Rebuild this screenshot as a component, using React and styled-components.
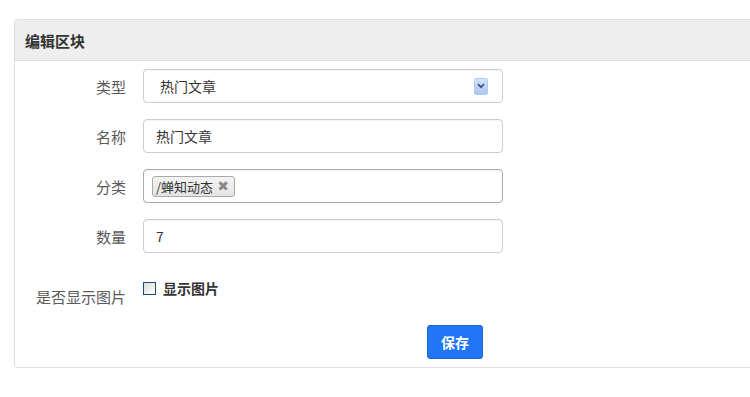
import React from "react";
import styled, { createGlobalStyle } from "styled-components";

const Global = createGlobalStyle`
  html, body { margin: 0; padding: 0; background: #fff; overflow: hidden; }
  body { font-family: "Noto Sans CJK SC", "Liberation Sans", sans-serif; font-size: 14px; color: #333; }
`;

const Page = styled.div`
  padding: 19px 0 0 14px;
`;

const Panel = styled.section`
  width: 800px;
  border: 1px solid #dddddd;
  border-radius: 4px 0 0 4px;
  background: #fff;
`;

const Header = styled.header`
  height: 40px;
  background: #eeeeee;
  border-bottom: 1px solid #dddddd;
  border-radius: 4px 0 0 0;
  display: flex;
  align-items: center;
  padding-left: 10px;
  font-weight: bold;
  font-size: 15px;
  color: #333;
`;

const Body = styled.div`
  padding: 8px 0 8px 0;
  display: flex;
  flex-direction: column;
  gap: 16px;
`;

const Row = styled.div`
  display: grid;
  grid-template-columns: 111px 360px;
  column-gap: 17px;
  align-items: ${(p) => p.$align || "center"};
  min-height: ${(p) => p.$h || 34}px;
`;

const Label = styled.label`
  text-align: right;
  color: #5a5a5a;
  font-size: 15px;
  padding-top: ${(p) => p.$pt || 0}px;
`;

const Field = styled.div`
  box-sizing: border-box;
  height: 34px;
  border: 1px solid ${(p) => (p.$dark ? "#aaaaaa" : "#cccccc")};
  border-radius: 4px;
  background: #fff;
  display: flex;
  align-items: center;
  padding-left: ${(p) => p.$pl || 12}px;
  padding-right: 14px;
  font-size: 14px;
  color: #333;
  box-shadow: inset 0 1px 1px rgba(0, 0, 0, 0.04);
`;

const Grow = styled.span`
  flex: 1;
`;

const ArrowBox = styled.span`
  width: 14px;
  height: 17px;
  box-sizing: border-box;
  border-radius: 2px;
  background: linear-gradient(#d3e2fa, #aac7f2);
  border: 1px solid #b5cbee;
  display: flex;
  align-items: center;
  justify-content: center;
`;

const Tag = styled.span`
  box-sizing: border-box;
  width: 83px;
  height: 21px;
  display: inline-flex;
  align-items: center;
  justify-content: space-between;
  padding: 0 5px 0 3px;
  border: 1px solid #aaaaaa;
  border-radius: 3px;
  background: linear-gradient(#f4f4f4, #e4e4e4);
  font-size: 13px;
  color: #333;
  margin-left: -4px;
`;

const Close = styled.span`
  color: #8a8a8a;
  font-size: 14px;
  line-height: 1;
  font-family: "DejaVu Sans", sans-serif;
`;

const CheckWrap = styled.div`
  display: flex;
  align-items: center;
  gap: 7px;
  font-weight: bold;
  color: #333;
  font-size: 14px;
  padding-top: 9px;
`;

const Box = styled.span`
  width: 13px;
  height: 13px;
  box-sizing: border-box;
  border: 1px solid #1f4a78;
  background: linear-gradient(135deg, #dcdcd8, #ffffff);
  display: inline-block;
`;

const Button = styled.button`
  margin-left: 284px;
  width: 56px;
  height: 34px;
  border: 1px solid #1a66d8;
  border-radius: 3px;
  background: #2176f6;
  color: #fff;
  font-weight: bold;
  font-size: 14px;
  font-family: "Noto Sans CJK SC", sans-serif;
  padding: 0;
`;

export default function App() {
  return (
    <>
      <Global />
      <Page>
        <Panel>
          <Header>编辑区块</Header>
          <Body>
            <Row>
              <Label>类型</Label>
              <Field $pl={16}>
                <Grow>热门文章</Grow>
                <ArrowBox>
                  <svg width="8" height="6" viewBox="0 0 8 6">
                    <path d="M1 1.2 L4 4.2 L7 1.2" stroke="#45557a" strokeWidth="1.8" fill="none" />
                  </svg>
                </ArrowBox>
              </Field>
            </Row>
            <Row>
              <Label>名称</Label>
              <Field>热门文章</Field>
            </Row>
            <Row>
              <Label>分类</Label>
              <Field $dark>
                <Tag>
                  /蝉知动态<Close>✖</Close>
                </Tag>
              </Field>
            </Row>
            <Row>
              <Label>数量</Label>
              <Field>7</Field>
            </Row>
            <Row $align="start" $h={40}>
              <Label $pt={17}>是否显示图片</Label>
              <CheckWrap>
                <Box />
                显示图片
              </CheckWrap>
            </Row>
            <Row>
              <span />
              <div>
                <Button>保存</Button>
              </div>
            </Row>
          </Body>
        </Panel>
      </Page>
    </>
  );
}
